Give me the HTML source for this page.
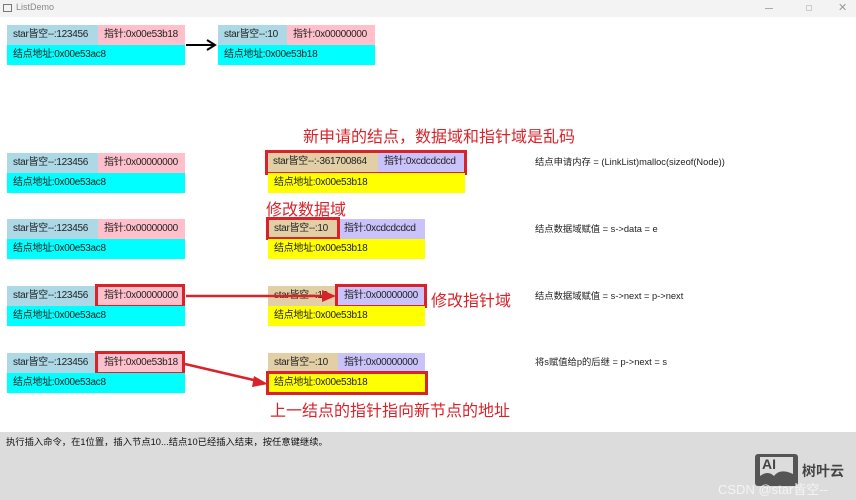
<!DOCTYPE html><html><head><meta charset="utf-8"><style>
*{margin:0;padding:0;box-sizing:border-box}
body{width:856px;height:500px;position:relative;background:#fff;font-family:"Liberation Sans","Noto Sans CJK SC",sans-serif;overflow:hidden;color:#222}
div{position:absolute}
.c{height:20px;font-size:10px;line-height:20px;padding-left:6px;white-space:nowrap;letter-spacing:-0.3px;overflow:hidden}
.b{background:#add8e6}.p{background:#ffc0cb}.cy{background:#00ffff}.t{background:#e2cfa6}.l{background:#c9c2fb}.y{background:#ffff00}
.r{border:3px solid #d8232a}
.red{color:#d8232a;font-size:16px;white-space:nowrap}
.n{font-size:9.3px;white-space:nowrap;color:#222}
</style></head><body>
<div style="left:0;top:0;width:856px;height:17px;background:#f3f3f3"></div>
<div style="left:3px;top:4px;width:9px;height:8px;border:1px solid #777"></div>
<div style="left:16px;top:2px;font-size:9px;color:#888">ListDemo</div>
<div style="left:765px;top:8px;width:8px;height:1px;background:#aaa"></div>
<div style="left:806px;top:5px;width:6px;height:6px;border:1px solid #ccc"></div>
<div style="left:838px;top:1px;font-size:11px;color:#999">✕</div>

<!-- row0 -->
<div class="c b" style="left:7px;top:25px;width:91px">star皆空--:123456</div>
<div class="c p" style="left:98px;top:25px;width:87px">指针:0x00e53b18</div>
<div class="c cy" style="left:7px;top:45px;width:178px">结点地址:0x00e53ac8</div>
<div class="c b" style="left:218px;top:25px;width:69px">star皆空--:10</div>
<div class="c p" style="left:287px;top:25px;width:88px">指针:0x00000000</div>
<div class="c cy" style="left:218px;top:45px;width:157px">结点地址:0x00e53b18</div>

<!-- row1 -->
<div class="c b" style="left:7px;top:153px;width:91px">star皆空--:123456</div>
<div class="c p" style="left:98px;top:153px;width:87px">指针:0x00000000</div>
<div class="c cy" style="left:7px;top:173px;width:178px">结点地址:0x00e53ac8</div>
<div class="red" style="left:303px;top:123px">新申请的结点，数据域和指针域是乱码</div>
<div class="c t" style="left:267px;top:152px;width:111px">star皆空--:-361700864</div>
<div class="c l" style="left:378px;top:152px;width:87px">指针:0xcdcdcdcd</div>
<div class="r" style="left:265px;top:150px;width:202px;height:25px"></div>
<div class="c y" style="left:268px;top:173px;width:197px">结点地址:0x00e53b18</div>
<div class="n" style="left:535px;top:154px">结点申请内存 = (LinkList)malloc(sizeof(Node))</div>

<!-- row2 -->
<div class="c b" style="left:7px;top:219px;width:91px">star皆空--:123456</div>
<div class="c p" style="left:98px;top:219px;width:87px">指针:0x00000000</div>
<div class="c cy" style="left:7px;top:239px;width:178px">结点地址:0x00e53ac8</div>
<div class="red" style="left:266px;top:196px">修改数据域</div>
<div class="c t" style="left:268px;top:219px;width:70px">star皆空--:10</div>
<div class="c l" style="left:338px;top:219px;width:87px">指针:0xcdcdcdcd</div>
<div class="r" style="left:266px;top:217px;width:74px;height:23px"></div>
<div class="c y" style="left:268px;top:239px;width:157px">结点地址:0x00e53b18</div>
<div class="n" style="left:535px;top:221px">结点数据域赋值 = s->data = e</div>

<!-- row3 -->
<div class="c b" style="left:7px;top:286px;width:91px">star皆空--:123456</div>
<div class="c p" style="left:98px;top:286px;width:87px">指针:0x00000000</div>
<div class="r" style="left:95px;top:284px;width:90px;height:24px"></div>
<div class="c cy" style="left:7px;top:306px;width:178px">结点地址:0x00e53ac8</div>
<div class="c t" style="left:268px;top:286px;width:70px">star皆空--:10</div>
<div class="c l" style="left:338px;top:286px;width:87px">指针:0x00000000</div>
<div class="r" style="left:335px;top:284px;width:92px;height:24px"></div>
<div class="c y" style="left:268px;top:306px;width:157px">结点地址:0x00e53b18</div>
<div class="red" style="left:431px;top:287px">修改指针域</div>
<div class="n" style="left:535px;top:288px">结点数据域赋值 = s->next = p->next</div>

<!-- row4 -->
<div class="c b" style="left:7px;top:353px;width:91px">star皆空--:123456</div>
<div class="c p" style="left:98px;top:353px;width:87px">指针:0x00e53b18</div>
<div class="r" style="left:95px;top:351px;width:90px;height:24px"></div>
<div class="c cy" style="left:7px;top:373px;width:178px">结点地址:0x00e53ac8</div>
<div class="c t" style="left:268px;top:353px;width:70px">star皆空--:10</div>
<div class="c l" style="left:338px;top:353px;width:87px">指针:0x00000000</div>
<div class="c y" style="left:268px;top:373px;width:157px">结点地址:0x00e53b18</div>
<div class="r" style="left:266px;top:371px;width:162px;height:24px"></div>
<div class="red" style="left:270px;top:397px">上一结点的指针指向新节点的地址</div>
<div class="n" style="left:535px;top:354px">将s赋值给p的后继 = p->next = s</div>

<svg style="position:absolute;left:0;top:0" width="856" height="500">
<path d="M186 45 L215 45 M207 40 L215 45 L207 50" stroke="#000" stroke-width="2" fill="none"/>
<path d="M186 296 L325 296" stroke="#d8232a" stroke-width="2.5"/><path d="M336 296 L322 290 L322 302Z" fill="#d8232a"/>
<path d="M185 364 L258 381" stroke="#d8232a" stroke-width="2.5"/><path d="M268 384 L254 376 L252 387Z" fill="#d8232a"/>
</svg>

<!-- bottom -->
<div style="left:0;top:432px;width:856px;height:68px;background:#dcdcdc"></div>
<div style="left:6px;top:434px;font-size:9.3px;color:#111;white-space:nowrap">执行插入命令，在1位置，插入节点10...结点10已经插入结束，按任意键继续。</div>
<div style="left:755px;top:454px;width:43px;height:32px;background:#555;border-radius:3px"></div>
<div style="left:760px;top:457px;width:33px;height:24px;background:#dcdcdc"></div>
<div style="left:762px;top:456px;font-size:14px;font-weight:bold;color:#444">AI</div>
<svg style="position:absolute;left:760px;top:466px" width="33" height="16"><path d="M0 16 L0 10 Q8 4 14 10 Q20 2 33 8 L33 16Z" fill="#555"/></svg>
<div style="left:802px;top:461px;font-size:14px;font-weight:bold;color:#444">树叶云</div>
<div style="left:718px;top:479px;font-size:13px;color:#f4f4f4;white-space:nowrap">CSDN @star皆空--</div>
</body></html>
